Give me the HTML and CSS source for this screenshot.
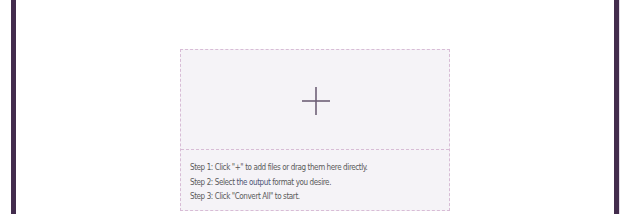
FILE: index.html
```html
<!DOCTYPE html>
<html>
<head>
<meta charset="utf-8">
<link rel="stylesheet" href="styles.css">
</head>
<body>
<div class="frame">
  <div class="dropbox">
    <div class="dropzone">
      <svg class="plus" width="28" height="28" viewBox="0 0 28 28">
        <line x1="0" y1="14" x2="28" y2="14" stroke="#6f5f76" stroke-width="1.6"/>
        <line x1="14" y1="0" x2="14" y2="28" stroke="#6f5f76" stroke-width="1.6"/>
      </svg>
    </div>
    <div class="steps">
      <p class="step">Step 1: Click "+" to add files or drag them here directly.</p>
      <p class="step">Step 2: Select <span class="hl">the output</span> format you desire.</p>
      <p class="step">Step 3: Click "Convert All" to start.</p>
    </div>
  </div>
</div>
</body>
</html>
```

FILE: styles.css
```css
html, body {
  margin: 0;
  padding: 0;
  background: #ffffff;
  height: 214px;
  overflow: hidden;
}
.frame {
  margin-left: 11px;
  width: 608px;
  height: 214px;
  border-left: 5px solid #432c4d;
  border-right: 5px solid #432c4d;
  box-shadow: 1px 0 0 #e4dde8;
  display: flex;
  justify-content: center;
  align-items: flex-start;
  padding-top: 49px;
  box-sizing: border-box;
}
.dropbox {
  width: 268px;
  height: 160px;
  border: 1px dashed #d8bcd6;
  background: #f5f3f7;
  display: flex;
  flex-direction: column;
}
.dropzone {
  height: 99px;
  border-bottom: 1px dashed #d8bcd6;
  display: flex;
  align-items: center;
  justify-content: center;
}
.plus {
  display: block;
  margin-left: 1px;
  margin-top: 3px;
}
.steps {
  padding: 11px 0 0 9px;
}
.step {
  margin: 0;
  font-family: "Liberation Sans Narrow", "DejaVu Sans Condensed", "Liberation Sans", sans-serif;
  font-size: 8px;
  letter-spacing: -0.4px;
  line-height: 14.5px;
  color: #5a5a5a;
  white-space: nowrap;
}
.hl {
  color: #4d5677;
}
```
